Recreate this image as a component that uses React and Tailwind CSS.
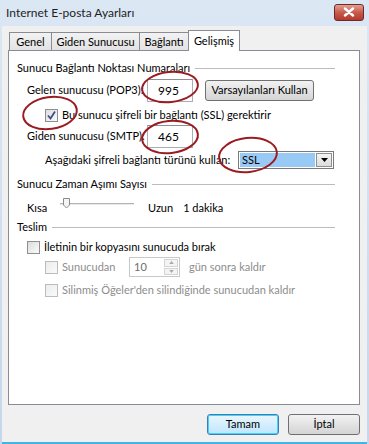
const font = { fontFamily: 'Lato, "Noto Sans", sans-serif' };

function CheckBox({ checked = false, disabled = false }) {
  return (
    <span
      className={`flex h-[13px] w-[13px] shrink-0 items-center justify-center border ${
        disabled ? "border-[#bcbcbc] bg-gradient-to-br from-[#ececec] to-[#fafafa]" : "border-[#8e8f8f] bg-gradient-to-br from-[#dcdcdc] to-[#fbfbfb]"
      }`}
    >
      {checked && (
        <svg width="11" height="11" viewBox="0 0 11 11">
          <path d="M2 5.5 L4.5 8.5 L9 1.5" fill="none" stroke="#3c4f82" strokeWidth="1.8" />
        </svg>
      )}
    </span>
  );
}

function GroupHeader({ title }) {
  return (
    <div className="flex h-[14px] items-center gap-[5px] pl-[8px] pr-[24px]">
      <span>{title}</span>
      <span className="h-px flex-1 bg-[#bcbcbc]" />
    </div>
  );
}

function NumberBox({ value }) {
  return (
    <div className="flex h-[23px] w-[46px] items-center border border-[#abadb3] border-t-[#8e8f96] bg-white pl-[10px] text-[12px]">
      {value}
    </div>
  );
}

function WinButton({ children, primary = false, className = "" }) {
  return (
    <button
      className={`flex h-[21px] items-center justify-center rounded-[3px] border ${
        primary
          ? "border-[#3c7fb1] bg-gradient-to-b from-[#eaf6fd] to-[#bee6fd] shadow-[inset_0_0_0_1px_#48d0fc]"
          : "border-[#707070] bg-gradient-to-b from-[#f2f2f2] to-[#d4d4d4]"
      } ${className}`}
    >
      {children}
    </button>
  );
}

export default function App() {
  const tabs = [
    ["Genel", "w-[43px]"],
    ["Giden Sunucusu", "w-[89px]"],
    ["Bağlantı", "w-[50px]"],
  ];
  return (
    <div
      className="relative flex h-[444px] w-[369px] flex-col overflow-hidden whitespace-nowrap bg-gradient-to-b from-[#dce7f4] to-[#c5d7ec] text-[11px] text-black"
      style={font}
    >
      {/* title bar */}
      <div className="flex h-[26px] shrink-0 items-center justify-between pl-[6px] pr-[5px]">
        <span className="text-[12px] text-[#1e1e1e]">Internet E-posta Ayarları</span>
        <div className="mt-[-2px] flex h-[17px] w-[30px] items-center justify-center rounded-[3px] border border-[#6e2a2a] bg-gradient-to-b from-[#e3a093] via-[#c75b4c] to-[#b33a2a]">
          <svg width="12" height="10" viewBox="0 0 12 10">
            <path d="M2 1.5 L10 8.5 M10 1.5 L2 8.5" stroke="#fff" strokeWidth="2.4" strokeLinecap="round" />
          </svg>
        </div>
      </div>

      {/* body */}
      <div className="mx-[2px] flex flex-1 flex-col border-b-[2px] border-[#3fb6e3] bg-[#f0f0f0]">
        {/* tabs */}
        <div className="mt-[4px] flex h-[20px] items-end pl-[7px]">
          {tabs.map(([t, w]) => (
            <div
              key={t}
              className={`-mr-px flex h-[18px] items-center justify-center border border-b-0 border-[#898c95] bg-gradient-to-b from-[#f2f2f2] to-[#e3e3e3] pt-[1px] ${w}`}
            >
              {t}
            </div>
          ))}
          <div className="relative z-10 -mb-px flex h-[21px] w-[52px] items-start justify-center border border-b-0 border-[#898c95] bg-white pt-[2px]">
            Gelişmiş
          </div>
        </div>

        {/* panel */}
        <div className="ml-[6px] flex h-[355px] w-[352px] flex-col border border-[#898c95] bg-white">
          <div className="mt-[10px]">
            <GroupHeader title="Sunucu Bağlantı Noktası Numaraları" />
          </div>
          <div className="mt-[4px] flex h-[23px] items-center pl-[18px]">
            <span className="w-[120px]">Gelen sunucusu (POP3):</span>
            <NumberBox value="995" />
            <WinButton className="ml-[12px] w-[109px]">Varsayılanları Kullan</WinButton>
          </div>
          <div className="mt-[6px] flex h-[14px] items-center gap-[4px] pl-[36px]">
            <CheckBox checked />
            <span>Bu sunucu şifreli bir bağlantı (SSL) gerektirir</span>
          </div>
          <div className="mt-[3px] flex h-[23px] items-center pl-[18px]">
            <span className="w-[120px]">Giden sunucusu (SMTP):</span>
            <NumberBox value="465" />
          </div>
          <div className="mt-[3px] flex h-[18px] items-center pl-[36px]">
            <span className="w-[193px]">Aşağıdaki şifreli bağlantı türünü kullan:</span>
            <div className="flex h-[18px] w-[96px] border border-[#7a7a7a] bg-white p-px">
              <div className="flex flex-1 items-center bg-[#99c9f5] pl-[2px]">SSL</div>
              <div className="ml-px flex w-[16px] items-center justify-center border border-[#8e8f8f] bg-gradient-to-b from-[#f4f4f4] to-[#dcdcdc]">
                <svg width="7" height="4" viewBox="0 0 7 4">
                  <path d="M0 0 H7 L3.5 4 Z" fill="#000" />
                </svg>
              </div>
            </div>
          </div>
          <div className="mt-[8px]">
            <GroupHeader title="Sunucu Zaman Aşımı Sayısı" />
          </div>
          <div className="mt-[9px] flex h-[16px] items-center pl-[18px]">
            <span className="w-[33px]">Kısa</span>
            <div className="relative h-[16px] w-[74px]">
              <div className="absolute left-0 right-0 top-[3px] h-[2px] border-t border-[#b4b4b4] bg-[#e7eaea]" />
              <svg className="absolute left-[3px] top-[-2px]" width="7" height="11" viewBox="0 0 7 11">
                <path d="M0.5 0.5 H6.5 V7 L3.5 10 L0.5 7 Z" fill="#f5f5f5" stroke="#8a8a8a" />
              </svg>
            </div>
            <span className="ml-[14px]">Uzun</span>
            <span className="ml-[10px]">1 dakika</span>
          </div>
          <div className="mt-[4px]">
            <GroupHeader title="Teslim" />
          </div>
          <div className="mt-[6px] flex h-[14px] items-center gap-[4px] pl-[18px]">
            <CheckBox />
            <span>İletinin bir kopyasını sunucuda bırak</span>
          </div>
          <div className="mt-[3px] flex h-[20px] items-center pl-[36px] text-[#8d8d8d]">
            <CheckBox disabled />
            <span className="ml-[4px] w-[67px]">Sunucudan</span>
            <div className="flex h-[20px] w-[51px] items-center border border-[#c9c9c9] bg-white">
              <span className="flex-1 pl-[4px] text-[#6d6d6d]">10</span>
              <div className="mr-px flex h-[16px] w-[14px] flex-col gap-px">
                {["M0 4 L3 0 L6 4 Z", "M0 0 H6 L3 4 Z"].map((d) => (
                  <div key={d} className="flex flex-1 items-center justify-center border border-[#d4d4d4] bg-[#f4f4f4]">
                    <svg width="5" height="3" viewBox="0 0 6 4">
                      <path d={d} fill="#a8a8a8" />
                    </svg>
                  </div>
                ))}
              </div>
            </div>
            <span className="ml-[9px]">gün sonra kaldır</span>
          </div>
          <div className="mt-[6px] flex h-[14px] items-center gap-[4px] pl-[36px] text-[#8d8d8d]">
            <CheckBox disabled />
            <span>Silinmiş Öğeler'den silindiğinde sunucudan kaldır</span>
          </div>
        </div>

        {/* buttons */}
        <div className="mt-[9px] flex gap-[9px] pl-[205px]">
          <WinButton primary className="w-[72px]">Tamam</WinButton>
          <WinButton className="w-[72px]">İptal</WinButton>
        </div>
      </div>

      {/* red annotation circles */}
      <svg className="pointer-events-none absolute left-0 top-0" width="369" height="444">
        <g fill="none" stroke="#9a1c22" strokeWidth="2">
          <ellipse cx="170" cy="87" rx="28" ry="15" transform="rotate(-6 170 87)" />
          <ellipse cx="50" cy="113" rx="27" ry="16" transform="rotate(-8 50 113)" />
          <ellipse cx="170" cy="137" rx="28" ry="16" transform="rotate(-6 170 137)" />
          <ellipse cx="248" cy="155" rx="29" ry="17" transform="rotate(-6 248 155)" />
        </g>
      </svg>
    </div>
  );
}
